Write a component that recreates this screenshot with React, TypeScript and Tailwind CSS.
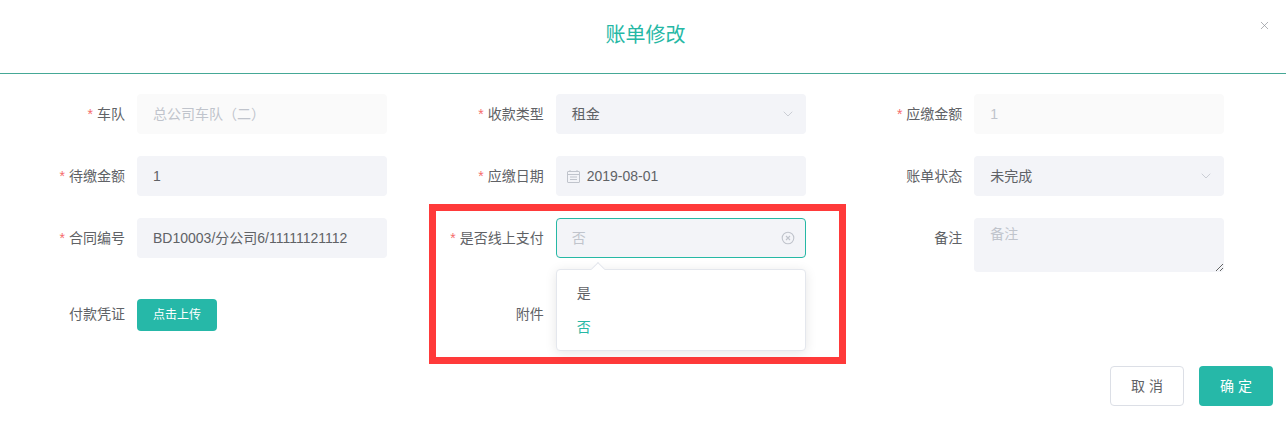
import { ReactNode } from "react";
import { X, ChevronDown } from "lucide-react";

// one form row: label on the left, control on the right
const Field = ({ label, required, children }: { label: string; required?: boolean; children: ReactNode }) => (
  <div className="flex mb-[22px]">
    <label className="w-[112px] pr-[12px] h-[40px] leading-[40px] text-right text-[14px] text-[#606266] shrink-0">
      {required && <span className="text-[#f56c6c] mr-[4px]">*</span>}
      {label}
    </label>
    <div className="w-[250px] relative">{children}</div>
  </div>
);

const Box = ({ disabled, children }: { disabled?: boolean; children: ReactNode }) => (
  <div
    className={
      disabled
        ? "h-[40px] rounded-[4px] bg-[#fafafa] px-[16px] flex items-center text-[14px] text-[#c0c4cc]"
        : "h-[40px] rounded-[4px] bg-[#f3f4f8] px-[16px] flex items-center text-[14px] text-[#606266]"
    }
  >
    {children}
  </div>
);

const Select = ({ value }: { value: string }) => (
  <Box>
    <span className="flex-1">{value}</span>
    <ChevronDown className="w-[16px] h-[16px] text-[#c0c4cc] mr-[-6px]" strokeWidth={1.2} />
  </Box>
);

const CalendarIcon = () => (
  <svg width="13" height="13" viewBox="0 0 13 13" fill="none" stroke="#c0c4cc" strokeWidth="1" className="shrink-0">
    <rect x="0.5" y="1.5" width="12" height="11" rx="0.5" />
    <path d="M0.5 4.5H12.5M3 0V2M10 0V2M3 7H10M3 9.5H10" />
  </svg>
);

const ClearIcon = () => (
  <svg width="14" height="14" viewBox="0 0 14 14" fill="none" stroke="#c0c4cc" className="shrink-0 mr-[-5px]">
    <circle cx="7" cy="7" r="5.8" strokeWidth="1.1" />
    <path d="M5 5L9 9M9 5L5 9" strokeWidth="1.1" />
  </svg>
);

const App = () => {
  return (
    <div className="relative h-[422px] w-[1286px] overflow-hidden bg-white font-['Liberation_Sans','Noto_Sans_CJK_SC',sans-serif]">
      {/* Header */}
      <div className="relative h-[74px] border-b border-[#45a896] flex items-start justify-center pl-[5px] pt-[20px]">
        <h2 className="text-[20px] leading-[30px] text-[#26b8a5]">账单修改</h2>
        <X className="absolute right-[15px] top-[19px] w-[13px] h-[13px] text-[#909399]" strokeWidth={1.3} absoluteStrokeWidth />
      </div>

      {/* Form */}
      <div className="grid grid-cols-3 w-[1256px] ml-[25px] pt-[20px]">
        <Field label="车队" required>
          <Box disabled>总公司车队（二）</Box>
        </Field>
        <Field label="收款类型" required>
          <Select value="租金" />
        </Field>
        <Field label="应缴金额" required>
          <Box disabled>1</Box>
        </Field>

        <Field label="待缴金额" required>
          <Box>1</Box>
        </Field>
        <Field label="应缴日期" required>
          <div className="h-[40px] rounded-[4px] bg-[#f3f4f8] pl-[11px] flex items-center gap-[7px] text-[14px] text-[#606266]">
            <CalendarIcon />
            <span>2019-08-01</span>
          </div>
        </Field>
        <Field label="账单状态">
          <Select value="未完成" />
        </Field>

        <Field label="合同编号" required>
          <Box>BD10003/分公司6/11111121112</Box>
        </Field>
        <Field label="是否线上支付" required>
          <div className="h-[40px] rounded-[4px] bg-[#f3f4f8] border border-[#26b8a5] px-[15px] flex items-center text-[14px] text-[#c0c4cc]">
            <span className="flex-1">否</span>
            <ClearIcon />
          </div>
          {/* Dropdown */}
          <div className="absolute z-10 left-0 top-[51px] w-[250px] bg-white border border-[#e4e7ed] rounded-[4px] py-[6px] shadow-[0_2px_12px_rgba(0,0,0,0.1)] text-[14px]">
            <span className="absolute -top-[6px] left-[36px] w-[10px] h-[10px] rotate-45 bg-white border-l border-t border-[#e4e7ed]" />
            <div className="h-[34px] leading-[34px] px-[20px] text-[#606266]">是</div>
            <div className="h-[34px] leading-[34px] px-[20px] text-[#26b8a5]">否</div>
          </div>
        </Field>
        <Field label="备注">
          <textarea
            placeholder="备注"
            className="block w-[250px] h-[54px] rounded-[4px] bg-[#f3f4f8] px-[16px] py-[6px] text-[14px] leading-[21px] text-[#606266] placeholder:text-[#c0c4cc] outline-none resize-y"
          />
        </Field>

        <Field label="付款凭证">
          <button className="mt-[5px] w-[80px] h-[32px] rounded-[4px] bg-[#26b8a8] text-white text-[12px]">点击上传</button>
        </Field>
        <Field label="附件">
          <div />
        </Field>
      </div>

      {/* Footer */}
      <div className="flex justify-end gap-[15px] pr-[13px] mt-[10px]">
        <button className="w-[74px] h-[40px] rounded-[4px] border border-[#dcdfe6] bg-white text-[14px] text-[#606266]">取 消</button>
        <button className="w-[74px] h-[40px] rounded-[4px] bg-[#26b8a8] text-[14px] text-white">确 定</button>
      </div>

      {/* Red highlight drawn over the screenshot */}
      <div className="absolute left-[429px] top-[204px] w-[417px] h-[160px] border-[7px] border-[#ff3a3a] pointer-events-none" />
    </div>
  );
};

export default App;
